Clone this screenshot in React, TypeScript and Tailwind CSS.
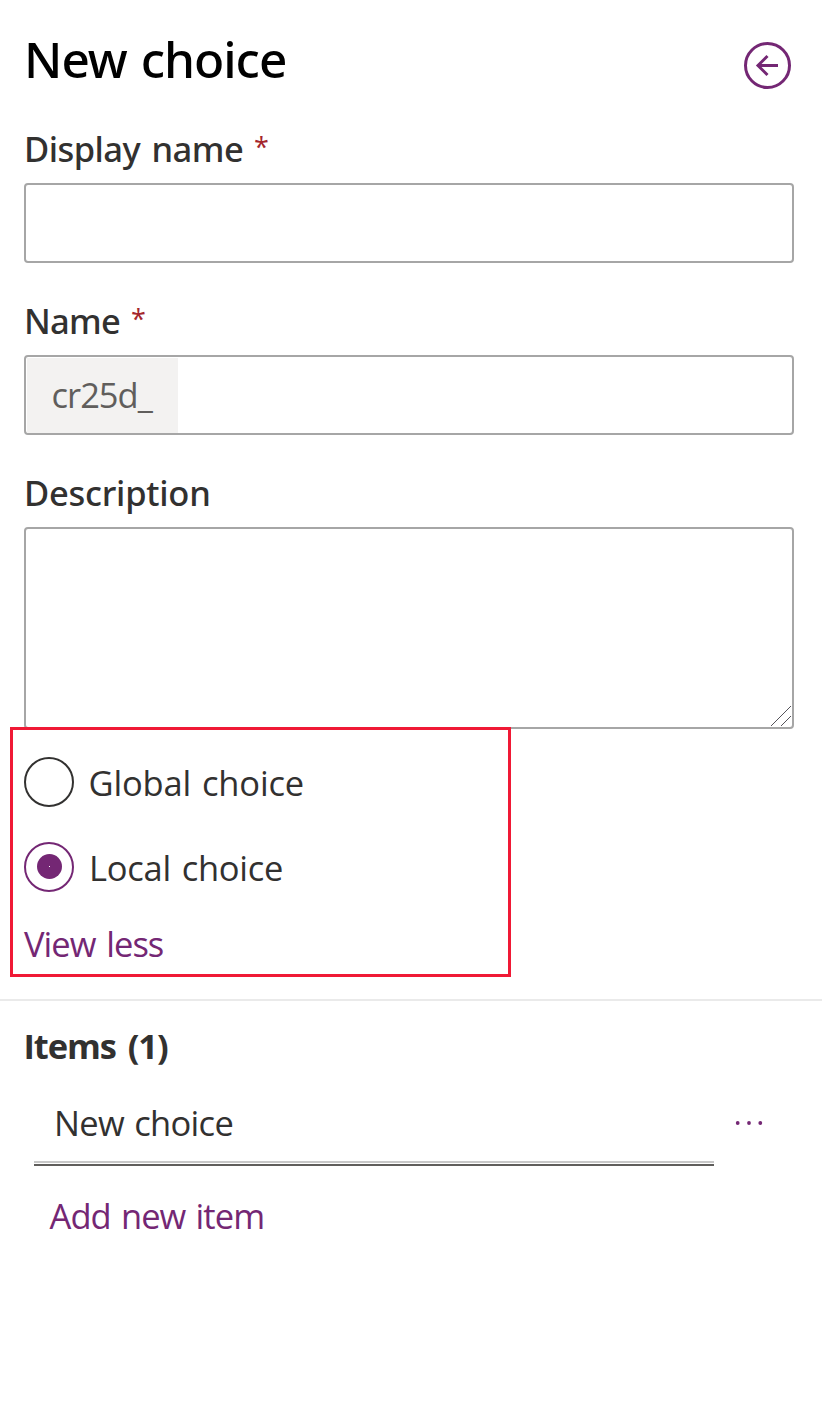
import React, { type ReactNode } from "react";

const BODY = "font-['Open_Sans','Liberation_Sans',sans-serif]";

function FieldLabel({ children, required, className = "" }: { children: ReactNode; required?: boolean; className?: string }) {
  return (
    <label className="flex h-[59px] items-start pl-[24px]">
      <span className={`whitespace-nowrap font-['Noto_Sans','Liberation_Sans',sans-serif] text-[34.5px] leading-[50px] font-medium text-[#323130] ${className}`}>
        {children}
      </span>
      {required && <span className="ml-[10px] text-[27px] leading-[46px] font-normal text-[#a4262c]">*</span>}
    </label>
  );
}

function Radio({ label, checked, className }: { label: string; checked?: boolean; className: string }) {
  return (
    <div className="flex h-[50px] items-center">
      <svg width="50" height="50" viewBox="0 0 50 50" fill="none">
        <circle cx="25" cy="25" r="24" strokeWidth="2" stroke={checked ? "#742774" : "#323130"} />
        {checked && (
          <>
            <circle cx="25.5" cy="24.5" r="12.5" fill="#742774" />
            <rect x="25" y="24" width="1" height="1" fill="#fff" />
          </>
        )}
      </svg>
      <span className={`whitespace-nowrap text-[34.5px] leading-[48px] text-[#323130] ${className}`}>{label}</span>
    </div>
  );
}

export default function App() {
  return (
    <main className={`flex h-[1410px] w-[822px] flex-col overflow-hidden bg-white ${BODY}`}>
      <header className="flex h-[124px] items-start justify-between pt-[27px] pr-[31px] pl-[24px]">
        <h1 className="font-['Noto_Sans','Liberation_Sans',sans-serif] text-[49.5px] leading-[64px] font-medium tracking-[-1px] [word-spacing:2px] whitespace-nowrap text-black">
          New choice
        </h1>
        <button aria-label="Back" className="mt-[15px]">
          <svg width="47" height="47" viewBox="0 0 47 47" fill="none" stroke="#742774" strokeWidth="3">
            <circle cx="23.5" cy="23.5" r="22" />
            <path d="M34 23.5H14M23.5 14L14 23.5L23.5 33" />
          </svg>
        </button>
      </header>

      <FieldLabel required className="w-[220px] tracking-[-0.55px] [word-spacing:3px]">Display name</FieldLabel>
      <div className="ml-[24px] h-[80px] w-[770px] rounded-[4px] border-2 border-[#a6a6a6]" />

      <div className="h-[33px]" />
      <FieldLabel required className="w-[97px] tracking-[-0.7px]">Name</FieldLabel>
      <div className="ml-[24px] flex h-[80px] w-[770px] rounded-[4px] border-2 border-[#a6a6a6] pt-px pl-px">
        <div className="h-[75px] w-[151px] bg-[#f3f2f1] pl-[24.5px] text-[34.5px] leading-[74px] tracking-[-1px] text-[#605e5c]">
          cr25d_
        </div>
      </div>

      <div className="h-[33px]" />
      <FieldLabel className="tracking-[-0.25px]">Description</FieldLabel>
      <div className="ml-[24px] flex h-[202px] w-[770px] shrink-0 items-end justify-end rounded-[4px] border-2 border-[#a6a6a6]">
        <svg width="22" height="22" viewBox="0 0 22 22" stroke="#55535a" strokeWidth="1" fill="none">
          <path d="M1 21L21 1M11 21L21 11" />
        </svg>
      </div>

      <section className="relative -mt-[2px] ml-[10px] flex h-[250px] w-[501px] shrink-0 flex-col border-3 border-[#f01935] pt-[27px] pl-[11px]">
        <Radio label="Global choice" className="ml-[14.5px] pt-px tracking-[-0.15px] [word-spacing:2px]" />
        <div className="h-[35px]" />
        <Radio label="Local choice" checked className="ml-[15px] pt-px tracking-[-0.25px] [word-spacing:2px]" />
        <a className="mt-[28px] text-[34.5px] leading-[48px] tracking-[-1px] [word-spacing:3px] text-[#742774]">View less</a>
      </section>

      <div className="mt-[22px] h-[2px] shrink-0 bg-[#eaeaea]" />

      <h2 className="mt-[21px] pl-[23.5px] text-[34.5px] leading-[48px] font-bold tracking-[-1.1px] [word-spacing:4px] text-[#323130]">Items (1)</h2>
      <div className="mt-[29px] flex h-[67px] shrink-0">
        <div className="ml-[34px] flex w-[680px] flex-col">
          <div className="h-[62px] pl-[20px] text-[34.5px] leading-[48px] tracking-[-0.7px] [word-spacing:2px] text-[#323130]">New choice</div>
          <div className="h-[5px] border-t-2 border-b-2 border-t-[#c8c8c8] border-b-[#605e5c]" />
        </div>
        <svg className="mt-[21px] ml-[20px]" width="30" height="6" viewBox="0 0 30 6" fill="#742774">
          <circle cx="3.7" cy="3" r="1.9" />
          <circle cx="15" cy="3" r="1.9" />
          <circle cx="26.3" cy="3" r="1.9" />
        </svg>
      </div>
      <a className="mt-[26px] pl-[49.5px] text-[34.5px] leading-[48px] tracking-[-0.9px] [word-spacing:2px] text-[#742774]">Add new item</a>
    </main>
  );
}
